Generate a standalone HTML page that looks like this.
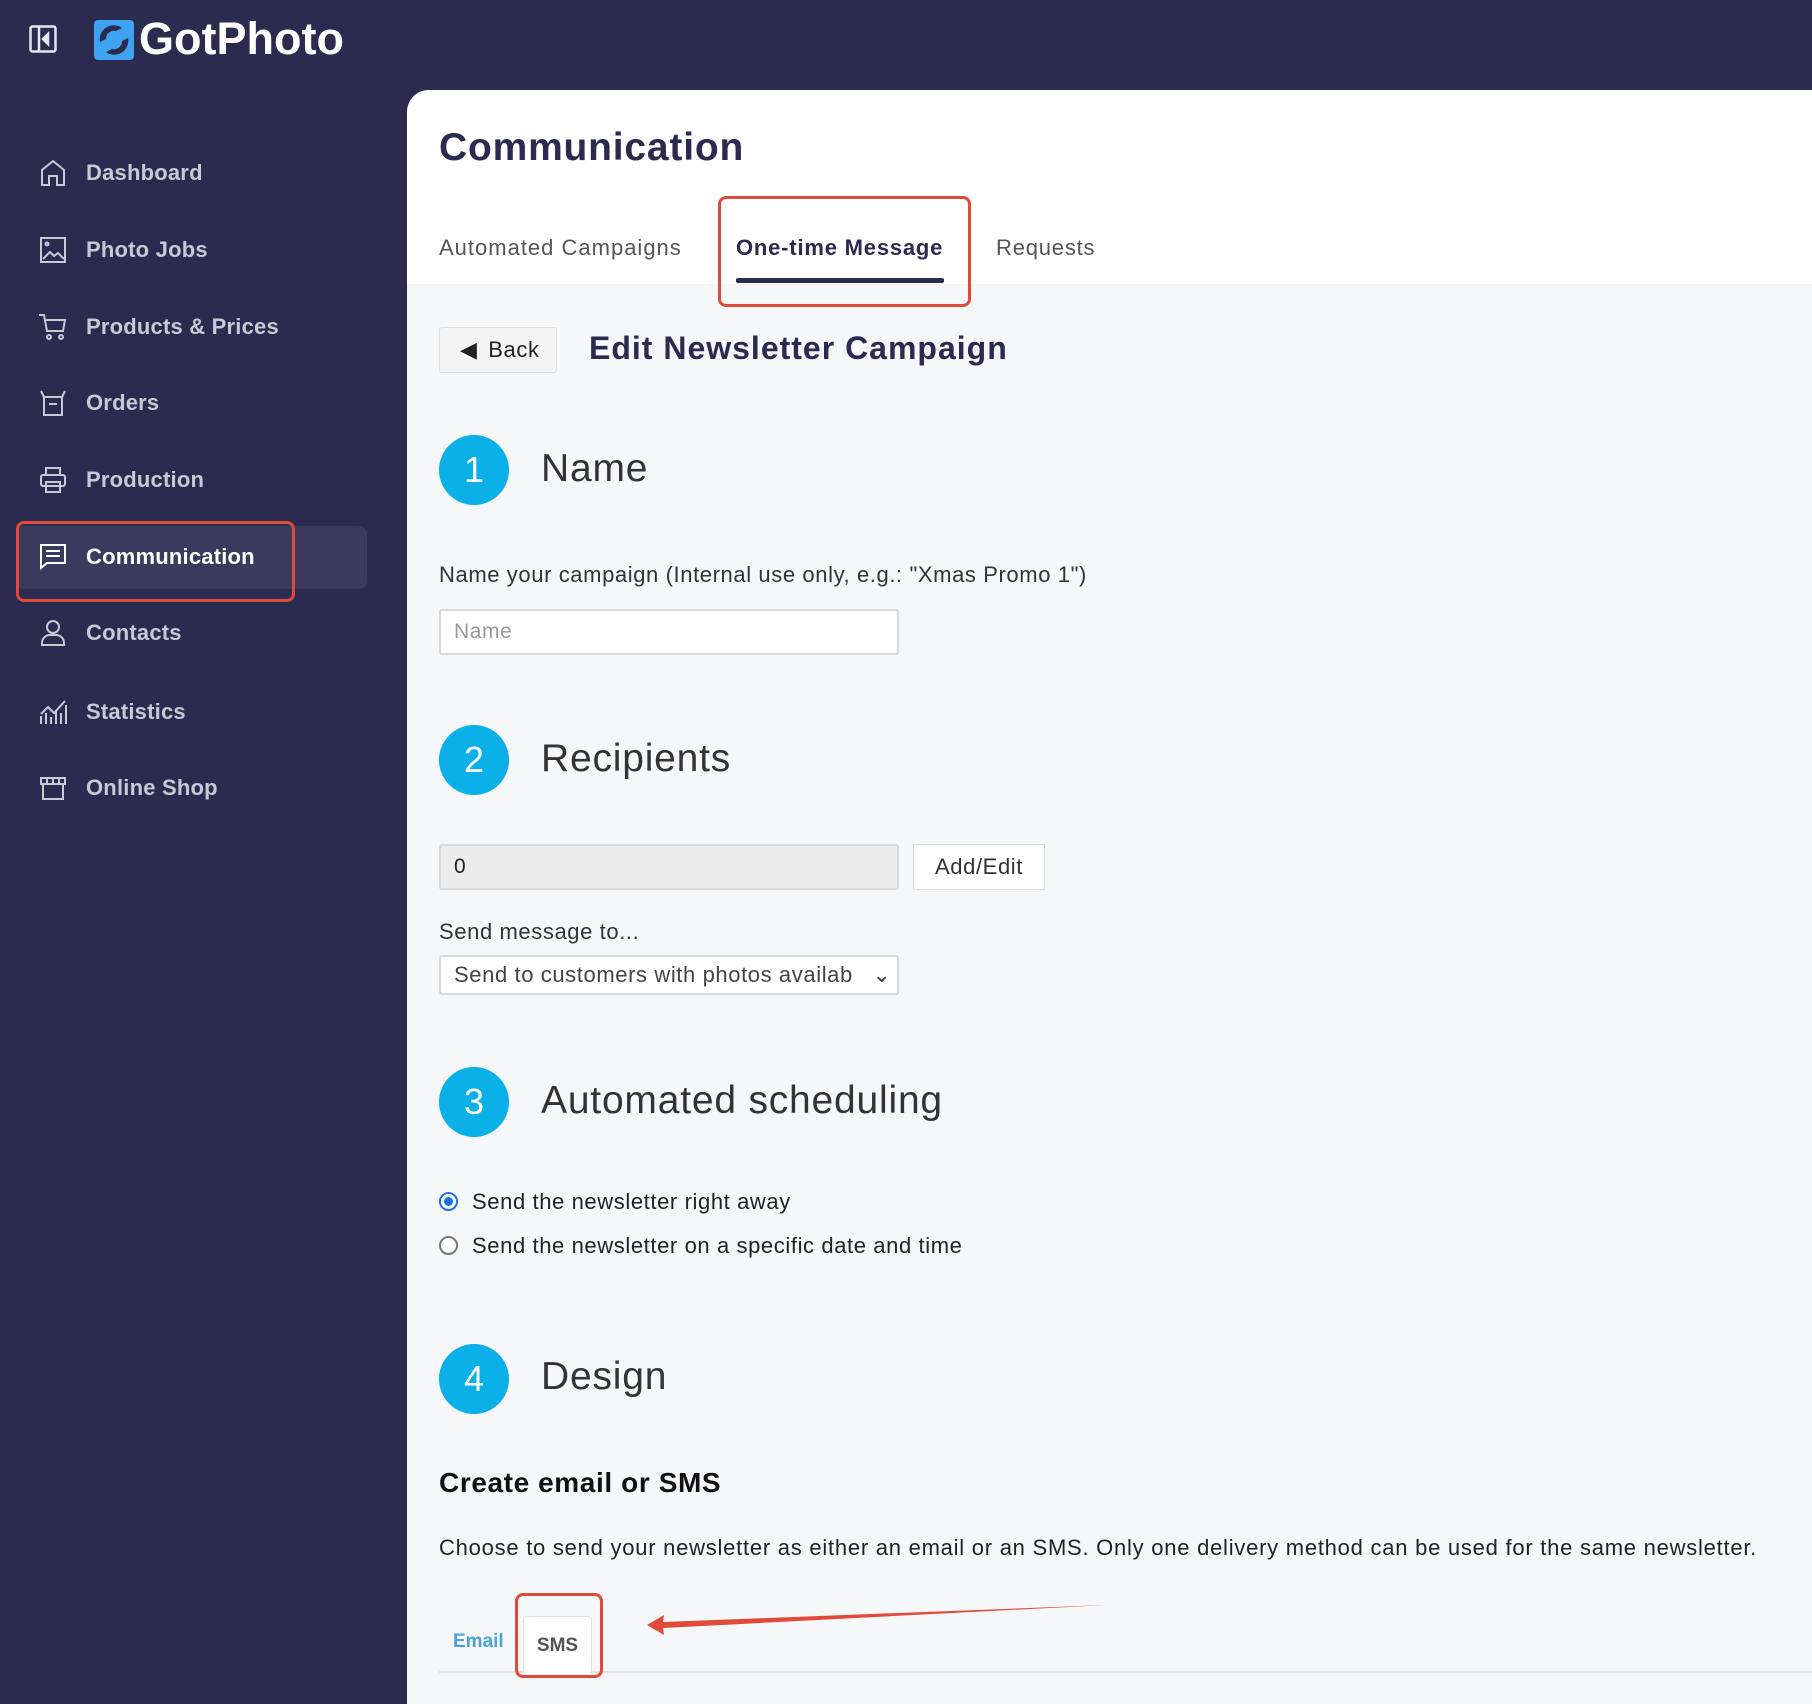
<!DOCTYPE html><html><head><meta charset="utf-8"><style>
*{box-sizing:border-box;margin:0;padding:0}
body{width:1812px;height:1704px;background:#2b2a4f;font-family:"Liberation Sans",sans-serif;position:relative;overflow:hidden;letter-spacing:0.6px}
.a{position:absolute}
.nav{position:absolute;left:38px;display:flex;align-items:center;color:#c8c8d6;font-size:22px;font-weight:bold;height:40px;letter-spacing:0.2px}
.nav svg{width:30px;height:30px;margin-right:18px;stroke:#c8c8d6;fill:none;stroke-width:2}
.panel{position:absolute;left:407px;top:90px;width:1405px;height:1614px;background:#f6f7f9;border-top-left-radius:22px;overflow:hidden}
.hdr{position:absolute;left:0;top:0;width:100%;height:194px;background:#fff}
.t{position:absolute;white-space:nowrap}
.circ{position:absolute;left:32px;width:70px;height:70px;border-radius:50%;background:#0bb0e8;color:#fff;font-size:36px;text-align:center;line-height:70px;letter-spacing:0}
.h2{position:absolute;left:134px;font-size:39px;color:#333;letter-spacing:0.8px}
.inp{position:absolute;left:32px;width:460px;height:46px;border:2px solid #d9d9d9;background:#fff;border-radius:3px;font-size:21px;padding-left:13px;line-height:42px}
</style></head><body>
<svg class="a" style="left:29px;top:25px" width="28" height="28" viewBox="0 0 28 28" fill="none" stroke="#e6e6ee" stroke-width="2.5"><rect x="1.5" y="1.5" width="25" height="25" rx="2"/><line x1="10" y1="2" x2="10" y2="26"/><path d="M19 9l-5 5 5 5z" fill="#e6e6ee"/></svg>
<svg class="a" style="left:94px;top:20px" width="40" height="40" viewBox="0 0 40 40"><rect x="0" y="0" width="40" height="40" rx="4" fill="#3ea2f0"/><path d="M6 22a14 14 0 0 1 22-14l-6 3a8 8 0 0 0-10 8z M34 18a14 14 0 0 1-22 14l6-3a8 8 0 0 0 10-8z" fill="#2b2a4f"/></svg>
<div class="t" style="left:139px;top:13px;font-size:45px;color:#fff;font-weight:bold;letter-spacing:0px">GotPhoto</div>
<div class="a" style="left:16px;top:526px;width:351px;height:63px;background:#3a3a5e;border-radius:8px"></div>
<div class="a" style="left:16px;top:521px;width:279px;height:81px;border:3px solid #e04a3a;border-radius:8px"></div>
<div class="nav" style="top:153px"><svg viewBox="0 0 30 30"><path d="M4 27V12L15 3l11 9v15h-7v-9h-8v9z"/></svg>Dashboard</div>
<div class="nav" style="top:230px"><svg viewBox="0 0 30 30"><rect x="3" y="3" width="24" height="24"/><path d="M5 24l7-7 4 4 4-3 6 6" /><circle cx="9" cy="9" r="1.5"/></svg>Photo Jobs</div>
<div class="nav" style="top:307px"><svg viewBox="0 0 30 30"><path d="M1 3h5l3 16h16l2-11H8"/><circle cx="11" cy="25" r="2"/><circle cx="23" cy="25" r="2"/></svg>Products &amp; Prices</div>
<div class="nav" style="top:383px"><svg viewBox="0 0 30 30"><path d="M3 3l3 6v18h18V9l3-6M6 9h18M11 16h8"/></svg>Orders</div>
<div class="nav" style="top:460px"><svg viewBox="0 0 30 30"><rect x="8" y="3" width="14" height="7"/><rect x="3" y="10" width="24" height="11" rx="2"/><rect x="8" y="17" width="14" height="10"/></svg>Production</div>
<div class="nav" style="top:537px;color:#fff"><svg viewBox="0 0 30 30" style="stroke:#fff"><path d="M3 3h24v18H9l-6 5z M8 9h14M8 14h14"/></svg>Communication</div>
<div class="nav" style="top:613px"><svg viewBox="0 0 30 30"><circle cx="15" cy="9" r="6"/><path d="M4 27v-2a8 8 0 0 1 8-8h6a8 8 0 0 1 8 8v2z"/></svg>Contacts</div>
<div class="nav" style="top:692px"><svg viewBox="0 0 30 30"><path d="M3 27V19M8 27V16M13 27V20M18 27V13M23 27V16M28 27V8M3 17l7-7 6 6 11-12"/></svg>Statistics</div>
<div class="nav" style="top:768px"><svg viewBox="0 0 30 30"><path d="M3 5h24v6H3zM5 11v15h20V11M9 5v6M15 5v6M21 5v6"/></svg>Online Shop</div>
<div class="panel">
<div class="hdr"></div>
<div class="t" style="left:32px;top:36px;font-size:39px;font-weight:bold;color:#2b2a4f;letter-spacing:0.8px">Communication</div>
<div class="t" style="left:32px;top:145px;font-size:22px;color:#555;letter-spacing:1px">Automated Campaigns</div>
<div class="t" style="left:329px;top:145px;font-size:22px;font-weight:bold;color:#2b2a4f;letter-spacing:0.8px">One-time Message</div>
<div class="a" style="left:329px;top:188px;width:208px;height:5px;background:#2b2a4f;border-radius:2px"></div>
<div class="a" style="left:311px;top:106px;width:253px;height:111px;border:3px solid #e04a3a;border-radius:8px"></div>
<div class="t" style="left:589px;top:145px;font-size:22px;color:#555;letter-spacing:0.8px">Requests</div>
<div class="a" style="left:32px;top:237px;width:118px;height:46px;border:1px solid #ddd;background:#f4f4f4;border-radius:3px;font-size:22px;color:#222;line-height:44px;padding-left:20px">&#9664;&#xFE0E; <span style="margin-left:4px">Back</span></div>
<div class="t" style="left:182px;top:240px;font-size:32px;font-weight:bold;color:#2b2a4f;letter-spacing:1px">Edit Newsletter Campaign</div>
<div class="circ" style="top:345px">1</div><div class="h2" style="top:357px">Name</div>
<div class="t" style="left:32px;top:472px;font-size:22px;color:#333">Name your campaign (Internal use only, e.g.: "Xmas Promo 1")</div>
<div class="inp" style="top:519px;color:#999">Name</div>
<div class="circ" style="top:635px">2</div><div class="h2" style="top:647px">Recipients</div>
<div class="inp" style="top:754px;background:#ececec;color:#222">0</div>
<div class="a" style="left:506px;top:754px;width:132px;height:46px;border:1px solid #ddd;background:#fff;font-size:22px;color:#333;line-height:44px;text-align:center">Add/Edit</div>
<div class="t" style="left:32px;top:829px;font-size:22px;color:#333">Send message to...</div>
<div class="inp" style="top:865px;height:40px;line-height:36px;color:#444;font-size:22px;overflow:hidden;white-space:nowrap">Send to customers with photos availab<span style="position:absolute;right:0;top:0;width:30px;background:#fff;text-align:center">&#8964;</span></div>
<div class="circ" style="top:977px">3</div><div class="h2" style="top:989px">Automated scheduling</div>
<div class="a" style="left:32px;top:1102px;width:19px;height:19px;border-radius:50%;border:2px solid #1a73e8;background:#fff"><div style="margin:3px;width:9px;height:9px;border-radius:50%;background:#1a73e8"></div></div>
<div class="t" style="left:65px;top:1099px;font-size:22px;color:#222">Send the newsletter right away</div>
<div class="a" style="left:32px;top:1146px;width:19px;height:19px;border-radius:50%;border:2px solid #777;background:#fff"></div>
<div class="t" style="left:65px;top:1143px;font-size:22px;color:#222">Send the newsletter on a specific date and time</div>
<div class="circ" style="top:1254px">4</div><div class="h2" style="top:1265px">Design</div>
<div class="t" style="left:32px;top:1377px;font-size:28px;font-weight:bold;color:#111">Create email or SMS</div>
<div class="t" style="left:32px;top:1445px;font-size:22px;color:#222;letter-spacing:0.75px">Choose to send your newsletter as either an email or an SMS. Only one delivery method can be used for the same newsletter.</div>
<div class="a" style="left:32px;top:1581px;width:1400px;height:2px;background:#e2e2e2"></div>
<div class="t" style="left:46px;top:1541px;font-size:19px;font-weight:bold;color:#4aa3d8;letter-spacing:0">Email</div>
<div class="a" style="left:116px;top:1526px;width:69px;height:57px;background:#fff;border:1px solid #e2e2e2;border-bottom:none;border-radius:4px 4px 0 0;font-size:19px;font-weight:bold;color:#555;text-align:center;line-height:58px;letter-spacing:0">SMS</div>
<div class="a" style="left:108px;top:1503px;width:88px;height:85px;border:3px solid #e04a3a;border-radius:8px"></div>
<svg class="a" style="left:230px;top:1515px" width="480" height="40"><polygon points="10,20 27,10 26,17 470,0 26,23 27,30" fill="#e04a3a"/></svg>
</div>
</body></html>
